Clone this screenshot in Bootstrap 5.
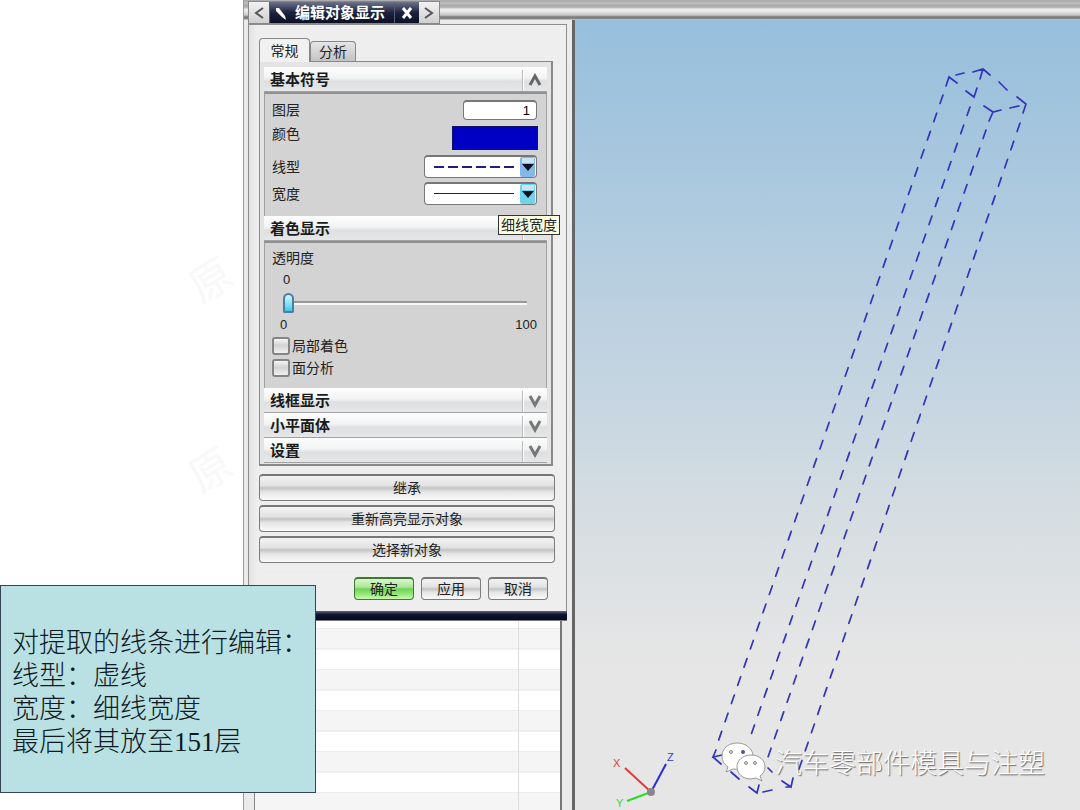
<!DOCTYPE html>
<html lang="zh-CN">
<head>
<meta charset="utf-8">
<meta name="viewport" content="width=device-width, initial-scale=1">
<title>编辑对象显示</title>
<link href="https://cdn.jsdelivr.net/npm/bootstrap@5.3.0/dist/css/bootstrap.min.css" rel="stylesheet">
<style>
body{font-family:"Liberation Sans","Noto Sans CJK SC",sans-serif;font-size:14px;line-height:16px;color:#222;background:#fff}
.margin-area{flex:0 1 243px}
.workspace{background:linear-gradient(#aaa 0,#c0c0c0 4px,#a6a6a6 5px,#bcbcbc 8px,#eee 9px,#eaeaea 11px,#c8c8c8 15px,#777 17px,#8a8a8a 19px,transparent 20px) top/100% 20px no-repeat,#ebebeb}
.dock{flex:0 0 329px;padding:1px 5px 0 4px;border-left:1px solid #999}
.dialog-title{width:192px;height:23px;border:1px solid #888;background:#1d2233}
.dialog-title button{border:0;padding:0;display:flex;align-items:center;justify-content:center}
.scroll-btn{width:20px;background:linear-gradient(#f2f2f2,#cfcfcf)}
.dialog-name{font-size:15px;font-weight:700;color:#fff;background:linear-gradient(#6c7289,#1d2340 50%,#0c1025);border-left:1px solid #555c75;border-right:1px solid #555c75}
.close-btn{width:24px;background:linear-gradient(#6c7289,#1d2340 50%,#0c1025)}
.dialog-body{border:1px solid #8d8d8d;border-bottom:0;background:linear-gradient(90deg,#e2e2e2,#eee 8px,#eee);padding:13px 11px 0 10px}
.dialog-foot{height:10px;background:linear-gradient(#5c6580,#0c1230 40%,#080c20);border-bottom:1px solid #777}
.tab-btn{border:1px solid #888;border-bottom:0;border-radius:4px 4px 0 0;background:linear-gradient(#e6e6e6,#c4c4c4);padding:0;width:46px;height:20px;color:#222}
.tab-btn.active{width:51px;height:24px;background:#f1f1f1;margin-bottom:-1px;z-index:1}
.tab-panel{border:1px solid #888;border-right-width:2px;border-bottom-width:2px;background:#e4e4e4;padding:5px 4px 1px 4px;margin-right:2px}
.sec-head{height:25px;border:0;border-bottom:1px solid #a2a2a2;background:linear-gradient(#fdfdfd,#f2f3f4 45%,#dddfe0 60%,#e6e7e8);padding:2px 0 0 6px;font-size:15px;font-weight:700;color:#1b1b1b}
.sec-arrow{width:25px;height:21px;border-left:1px solid #bbb;box-shadow:inset 1px 0 #fff}
.sec-body{background:#d3d3d3;border:1px solid #a0a0a0;border-top:2px solid #909090;border-bottom:0;padding:6px 9px 7px 7px}
.shade-body{padding:7px 9px 11px 7px}
.prop-row{margin-bottom:4px}
.color-row{padding-top:2px;margin-bottom:5px}
.num-box{width:74px;height:20px;border:1px solid #777;border-top-width:2px;border-radius:4px;background:#fff;text-align:right;padding:0 6px;font-size:13px}
.swatch{width:86px;height:24px;border:1px solid #111166;background:#0000c4;padding:0;margin-right:-1px}
.line-pick{position:relative;width:113px;height:23px}
.line-pick select{appearance:none;width:100%;height:100%;border:1px solid #777;border-top-width:2px;border-radius:4px;background:#fff;color:transparent}
.line-pick svg{position:absolute;inset:0;pointer-events:none}
.tip{position:absolute;right:-13px;top:-1px;z-index:3;border:1px solid #333;background:#fdfde2;padding:1px 2px;height:20px;white-space:nowrap}
.opacity-range{appearance:none;display:block;width:244px;height:21px;background:linear-gradient(#999,#999) 0 9px/100% 2px no-repeat,linear-gradient(#f6f6f6,#f6f6f6) 0 11px/100% 2px no-repeat;margin:4px 0 0 11px}
.opacity-range::-webkit-slider-thumb{appearance:none;width:11px;height:20px;border:2px solid #4a7fa5;border-radius:6px 6px 2px 2px;background:linear-gradient(#d8f4ff,#7fe0f4 60%,#43c4e0)}
.scale-num{font-size:13px}
.current-num{padding:6px 0 0 11px}
.tick{appearance:none;width:18px;height:18px;border:2px solid #858585;border-radius:3px;background:linear-gradient(#f7f7f7,#d2d2d2 45%,#f0f0f0);margin:0 2px 0 0}
.chrome-btn{border:1px solid #7c7c7c;border-top:2px solid #777;border-radius:4px;background:linear-gradient(#f3f3f3,#e2e2e2 40%,#c3c3c3 50%,#e4e4e4 65%,#fafafa);padding:0;font-size:14px;line-height:16px;color:#222}
.wide-btn{height:27px}
.small-btn{width:60px;height:23px}
.confirm-row{gap:7px;padding:5px 7px 11px 0}
.chrome-btn.ok{border-color:#3c7a34;background:linear-gradient(#d9f5cb,#aee79a 40%,#6fd257 50%,#8ce36f 70%,#c9f8ad)}
.sheet{margin-left:6px;margin-right:5px;border-right:2px solid #777;border-left:1px solid #888;background:linear-gradient(#ddd,#ddd) right 41px top/1px 100% no-repeat,repeating-linear-gradient(#fff 0,#fff 7px,#e4e4e4 7px,#f5f5f5 8px,#f5f5f5 27px,#e4e4e4 28px,#fff 29px,#fff 41px)}
.view3d{border-left:3px solid #666;margin-top:20px;background:linear-gradient(#97bfdc,#acc9df 22%,#bbd0e0 36%,#c7d6e1 49%,#d3dce1 60%,#dfe2e4 73%,#e6e6e6 82%)}
.note{left:0;bottom:17px;width:316px;height:208px;border:1px solid #345;background:#b9e0e2;padding:41px 10px 0 11px;font:300 27px/33px "Liberation Serif","Noto Sans CJK SC",serif;color:#0d1a22;z-index:5;white-space:nowrap}
.brand{right:35px;bottom:28px;font:300 27px/38px "Noto Sans CJK SC",sans-serif;color:#fff;text-shadow:1px 1px 1px #666;white-space:nowrap}
.faint{font:42px "Noto Sans CJK SC",sans-serif;fill:#000;opacity:.025}
.left-marks{left:170px;top:220px}
</style>
</head>
<body>
<main class="d-flex min-vh-100 position-relative overflow-hidden">
  <div class="margin-area">
    <svg class="position-absolute left-marks" width="73" height="300" aria-hidden="true"><g class="faint"><text transform="translate(31 84) rotate(-32)">原</text><text transform="translate(31 274) rotate(-32)">原</text></g></svg>
  </div>
  <div class="workspace d-flex flex-grow-1">
    <section class="dock d-flex flex-column">
      <header class="dialog-title d-flex">
        <button class="scroll-btn" aria-label="向左"><svg width="12" height="12"><path d="M10 1 3 6l7 5" fill="none" stroke="#555" stroke-width="2"/></svg></button>
        <div class="dialog-name d-flex flex-grow-1 align-items-center gap-2 ps-1"><svg width="13" height="14"><path d="M2 2 5 2 11 10 12 14 8 11 2 5Z" fill="#fff"/></svg>编辑对象显示</div>
        <button class="close-btn" aria-label="关闭"><svg width="12" height="12"><path d="M2 1l8 10M10 1 2 11" stroke="#fff" stroke-width="3"/></svg></button>
        <button class="scroll-btn" aria-label="向右"><svg width="12" height="12"><path d="M2 1l7 5-7 5" fill="none" stroke="#555" stroke-width="2"/></svg></button>
      </header>
      <div class="dialog-body">
        <div class="d-flex align-items-end" role="tablist">
          <button class="tab-btn active position-relative" role="tab" aria-selected="true">常规</button>
          <button class="tab-btn" role="tab" aria-selected="false">分析</button>
        </div>
        <div class="tab-panel">
          <button class="sec-head w-100 d-flex align-items-center justify-content-between">基本符号<span class="sec-arrow d-flex align-items-center justify-content-center"><svg width="16" height="14"><path d="M3 12 8 3l5 9" fill="none" stroke="#666" stroke-width="3"/></svg></span></button>
          <div class="sec-body">
            <div class="prop-row d-flex justify-content-between align-items-center"><label for="layer">图层</label><input id="layer" class="num-box" value="1"></div>
            <div class="color-row d-flex justify-content-between align-items-start"><label for="color">颜色</label><button id="color" class="swatch" aria-label="颜色"></button></div>
            <div class="prop-row d-flex justify-content-between align-items-center"><label for="ltype">线型</label>
              <div class="line-pick"><select id="ltype" aria-label="线型"><option></option></select>
              <svg width="113" height="23"><path d="M10 12H90" stroke="#1c1c8c" stroke-width="2" stroke-dasharray="10 4"/><rect x="96" y="2" width="15" height="20" rx="2" fill="#83b9e6"/><rect x="98" y="3" width="12" height="5" fill="#c9e4f8"/><path d="M98 9h12l-6 7z" fill="#112"/></svg></div></div>
            <div class="prop-row d-flex justify-content-between align-items-center"><label for="lwidth">宽度</label>
              <div class="line-pick"><select id="lwidth" aria-label="宽度"><option></option></select>
              <svg width="113" height="23"><path d="M10 11.500H90" stroke="#1c1c6c"/><rect x="96" y="2" width="15" height="20" rx="2" fill="#6fd3ea"/><rect x="98" y="3" width="12" height="5" fill="#c9e4f8"/><path d="M98 9h12l-6 7z" fill="#112"/></svg></div></div>
          </div>
          <div class="position-relative">
            <button class="sec-head w-100 d-flex align-items-center justify-content-between">着色显示<span class="sec-arrow"></span></button>
            <span class="tip" role="tooltip">细线宽度</span>
          </div>
          <div class="sec-body shade-body">
            <label for="opac" class="d-block">透明度</label>
            <div class="scale-num current-num">0</div>
            <input type="range" id="opac" class="opacity-range" value="0">
            <div class="scale-num d-flex justify-content-between ps-1 py-1"><span class="ps-1">0</span><span>100</span></div>
            <div class="prop-row d-flex align-items-center"><input type="checkbox" class="tick" id="part"><label for="part">局部着色</label></div>
            <div class="d-flex align-items-center"><input type="checkbox" class="tick" id="face"><label for="face">面分析</label></div>
          </div>
          <button class="sec-head w-100 d-flex align-items-center justify-content-between">线框显示<span class="sec-arrow d-flex align-items-center justify-content-center"><svg width="16" height="14"><path d="M3 2l5 9 5-9" fill="none" stroke="#777" stroke-width="3"/></svg></span></button>
          <button class="sec-head w-100 d-flex align-items-center justify-content-between">小平面体<span class="sec-arrow d-flex align-items-center justify-content-center"><svg width="16" height="14"><path d="M3 2l5 9 5-9" fill="none" stroke="#777" stroke-width="3"/></svg></span></button>
          <button class="sec-head w-100 d-flex align-items-center justify-content-between">设置<span class="sec-arrow d-flex align-items-center justify-content-center"><svg width="16" height="14"><path d="M3 2l5 9 5-9" fill="none" stroke="#777" stroke-width="3"/></svg></span></button>
        </div>
        <div class="d-grid gap-1 pt-2 pb-2">
          <button class="chrome-btn wide-btn">继承</button>
          <button class="chrome-btn wide-btn">重新高亮显示对象</button>
          <button class="chrome-btn wide-btn">选择新对象</button>
        </div>
        <div class="confirm-row border-top border-secondary-subtle d-flex justify-content-end">
          <button class="chrome-btn small-btn ok">确定</button>
          <button class="chrome-btn small-btn">应用</button>
          <button class="chrome-btn small-btn">取消</button>
        </div>
      </div>
      <div class="dialog-foot"></div>
      <div class="sheet flex-grow-1"></div>
    </section>
    <section class="view3d flex-grow-1 position-relative">
      <svg class="d-block w-100" viewBox="575 20 505 790" role="img" aria-label="长方体虚线">
        <g fill="none" stroke="#3434b8" stroke-width="1.700" stroke-linecap="round">
          <g stroke-dasharray="9 10.250">
            <path d="M943 95 718 742"/><path d="M970 107 751 735"/><path d="M986 130 767 760"/><path d="M1020 123 798 772"/>
          </g>
          <path d="M946 86l3-9 8 6M956 75l8-2M973 72l10-3 7 6M983 69l-3 10M999 82l8 8M1017 97l9 7-3 9M1010 108l9-2M984 106l9 6 8-2M993 112l-4 9M966 91l8 6 3-9"/>
          <path d="M716 750l-3 7 9-2M713 757l8 7M731 772l8 7M749 787l8 6 2-8M763 792l9-2M782 781l9 6 2-9M791 787h-5M768 768l4 4"/>
        </g>
        <g fill="none" stroke-width="2"><path d="M651 792 625 768" stroke="#e23b3b"/><path d="M651 792 627 801" stroke="#2bd92b"/><path d="M651 792 666 764" stroke="#2a2ae0"/></g>
        <circle cx="651" cy="792" r="4" fill="#888"/>
        <g font-family="Liberation Sans" font-size="11"><text x="613" y="767" fill="#e04040">X</text><text x="616" y="807" fill="#3ad93a">Y</text><text x="667" y="761" fill="#3a3ac8">Z</text></g>
      </svg>
      <div class="brand position-absolute d-flex align-items-center gap-2">
        <svg width="46" height="40" viewBox="0 0 46 40"><g stroke="#999" stroke-width="1"><path d="M16 1C7 1 1 7 1 14c0 5 2 8 6 11l-2 5 7-3c12 2 20-4 20-13C32 7 25 1 16 1Z" fill="#fff"/><path d="M30 13c-8 0-14 5-14 12s6 12 14 12l5-1 6 3-2-5c3-2 5-5 5-9 0-7-6-12-14-12Z" fill="#fff"/></g><g fill="#ddd" stroke="#888"><circle cx="10" cy="10" r="1.500"/><circle cx="25" cy="21" r="1.500"/><circle cx="34" cy="21" r="1.500"/></g><circle cx="22" cy="10" r="2" fill="#5050b0"/></svg>
        <span>汽车零部件模具与注塑</span>
      </div>
    </section>
  </div>
  <aside class="note position-absolute">对提取的线条进行编辑：<br>线型：虚线<br>宽度：细线宽度<br>最后将其放至151层</aside>
</main>
<script src="https://cdn.jsdelivr.net/npm/bootstrap@5.3.0/dist/js/bootstrap.bundle.min.js"></script>
</body>
</html>
